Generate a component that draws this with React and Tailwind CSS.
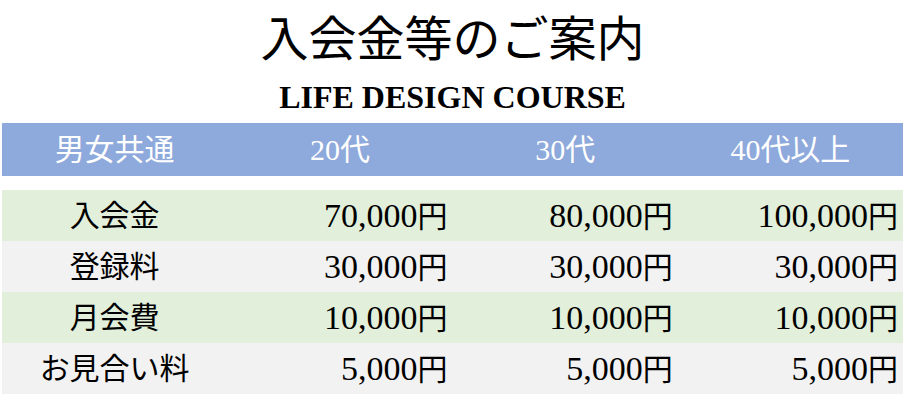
import React from 'react';

const rows = [
  { label: '入会金', values: ['70,000', '80,000', '100,000'], bg: 'bg-[#e2efda]' },
  { label: '登録料', values: ['30,000', '30,000', '30,000'], bg: 'bg-[#f2f2f2]' },
  { label: '月会費', values: ['10,000', '10,000', '10,000'], bg: 'bg-[#e2efda]' },
  { label: 'お見合い料', values: ['5,000', '5,000', '5,000'], bg: 'bg-[#f2f2f2]' },
];

const headers = ['男女共通', '20代', '30代', '40代以上'];

const App = () => {
  return (
    <div className="w-[905px] h-[407px] bg-white text-black font-['Liberation_Serif','Noto_Sans_CJK_JP',serif] flex flex-col">
      <div className="h-[80px] flex items-center justify-center text-[48px] leading-none">
        入会金等のご案内
      </div>
      <div className="h-[43px] flex justify-center text-[32px] leading-[34px] font-bold">
        LIFE DESIGN COURSE
      </div>

      <div className="px-[2px] flex flex-col">
        <div className="grid grid-cols-4 h-[53px] bg-[#8ea9db] text-white text-[30px] items-center">
          {headers.map((h) => (
            <div key={h} className="text-center">{h}</div>
          ))}
        </div>

        <div className="h-[14px]" />

        {rows.map((row) => (
          <div key={row.label} className={`grid grid-cols-4 h-[51px] items-center ${row.bg}`}>
            <div className="text-center text-[30px]">{row.label}</div>
            {row.values.map((v, i) => (
              <div key={i} className="text-right pr-[5px] text-[30px]">
                <span className="text-[34px]">{v}</span>円
              </div>
            ))}
          </div>
        ))}
      </div>
    </div>
  );
};

export default App;
